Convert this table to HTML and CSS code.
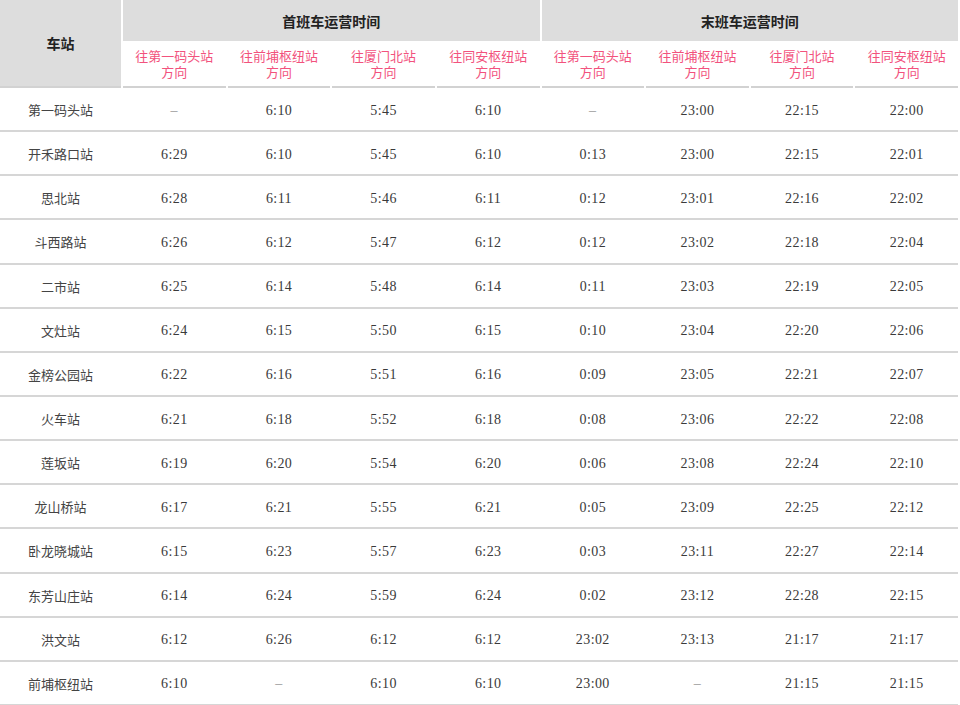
FILE: index.html
```html
<!DOCTYPE html>
<html lang="zh-CN">
<head>
<meta charset="utf-8">
<title>运营时间</title>
<link rel="stylesheet" href="styles.css">
</head>
<body>
<div class="table">
  <div class="head">
    <div class="station-head">车站</div>
    <div class="group g1">首班车运营时间</div>
    <div class="group g2">末班车运营时间</div>
    <div class="sub c1"><span>往第一码头站</span><span>方向</span></div>
    <div class="sub c2"><span>往前埔枢纽站</span><span>方向</span></div>
    <div class="sub c3"><span>往厦门北站</span><span>方向</span></div>
    <div class="sub c4"><span>往同安枢纽站</span><span>方向</span></div>
    <div class="sub c5"><span>往第一码头站</span><span>方向</span></div>
    <div class="sub c6"><span>往前埔枢纽站</span><span>方向</span></div>
    <div class="sub c7"><span>往厦门北站</span><span>方向</span></div>
    <div class="sub c8"><span>往同安枢纽站</span><span>方向</span></div>
  </div>
  <div class="body" id="body"></div>
</div>
<script>
const rows = [
 ["第一码头站","–","6:10","5:45","6:10","–","23:00","22:15","22:00"],
 ["开禾路口站","6:29","6:10","5:45","6:10","0:13","23:00","22:15","22:01"],
 ["思北站","6:28","6:11","5:46","6:11","0:12","23:01","22:16","22:02"],
 ["斗西路站","6:26","6:12","5:47","6:12","0:12","23:02","22:18","22:04"],
 ["二市站","6:25","6:14","5:48","6:14","0:11","23:03","22:19","22:05"],
 ["文灶站","6:24","6:15","5:50","6:15","0:10","23:04","22:20","22:06"],
 ["金榜公园站","6:22","6:16","5:51","6:16","0:09","23:05","22:21","22:07"],
 ["火车站","6:21","6:18","5:52","6:18","0:08","23:06","22:22","22:08"],
 ["莲坂站","6:19","6:20","5:54","6:20","0:06","23:08","22:24","22:10"],
 ["龙山桥站","6:17","6:21","5:55","6:21","0:05","23:09","22:25","22:12"],
 ["卧龙晓城站","6:15","6:23","5:57","6:23","0:03","23:11","22:27","22:14"],
 ["东芳山庄站","6:14","6:24","5:59","6:24","0:02","23:12","22:28","22:15"],
 ["洪文站","6:12","6:26","6:12","6:12","23:02","23:13","21:17","21:17"],
 ["前埔枢纽站","6:10","–","6:10","6:10","23:00","–","21:15","21:15"]
];
const body = document.getElementById('body');
rows.forEach(r => {
  const row = document.createElement('div');
  row.className = 'row';
  r.forEach((v, i) => {
    const c = document.createElement('div');
    c.className = i === 0 ? 'cell name' : (v === '–' ? 'cell time dash' : 'cell time');
    c.textContent = v;
    row.appendChild(c);
  });
  body.appendChild(row);
});
</script>
</body>
</html>
```

FILE: styles.css
```css
html, body {
  margin: 0;
  padding: 0;
  background: #ffffff;
}
.table {
  width: 958px;
  font-family: "Noto Sans CJK SC", sans-serif;
}
.head {
  display: grid;
  grid-template-columns: 121px repeat(8, 1fr);
  grid-template-rows: 41px 47px;
  column-gap: 2px;
}
.station-head {
  grid-row: 1 / 3;
  grid-column: 1;
  background: #dddddd;
  border-bottom: 2px solid #d2d2d2;
  display: flex;
  align-items: center;
  justify-content: center;
  font-size: 14px;
  font-weight: bold;
  color: #222222;
}
.group {
  background: #dddddd;
  display: flex;
  align-items: center;
  justify-content: center;
  font-size: 14px;
  font-weight: bold;
  color: #222222;
}
.g1 { grid-row: 1; grid-column: 2 / 6; }
.g2 { grid-row: 1; grid-column: 6 / 10; }
.sub {
  grid-row: 2;
  border-bottom: 2px solid #d2d2d2;
  display: flex;
  flex-direction: column;
  align-items: center;
  justify-content: center;
  gap: 0;
  text-align: center;
  font-size: 13px;
  color: #f2527d;
  padding-top: 1px;
  box-sizing: border-box;
}
.sub span {
  display: block;
  height: 16px;
  line-height: 16px;
  overflow: visible;
}
.c1 { grid-column: 2; }
.c2 { grid-column: 3; }
.c3 { grid-column: 4; }
.c4 { grid-column: 5; }
.c5 { grid-column: 6; }
.c6 { grid-column: 7; }
.c7 { grid-column: 8; }
.c8 { grid-column: 9; }
.row {
  display: grid;
  grid-template-columns: 121px repeat(8, 1fr);
  column-gap: 2px;
  height: 44.15px;
  box-sizing: border-box;
  border-bottom: 2px solid #d6d6d6;
  align-items: center;
}
.cell {
  text-align: center;
  color: #444444;
}
.name {
  font-size: 13px;
  padding-top: 1px;
}
.time {
  font-family: "Liberation Serif", serif;
  font-size: 14px;
  letter-spacing: 0.4px;
  padding-top: 3px;
  color: #3a3a3a;
}
.dash {
  color: #9a9a9a;
}
```
